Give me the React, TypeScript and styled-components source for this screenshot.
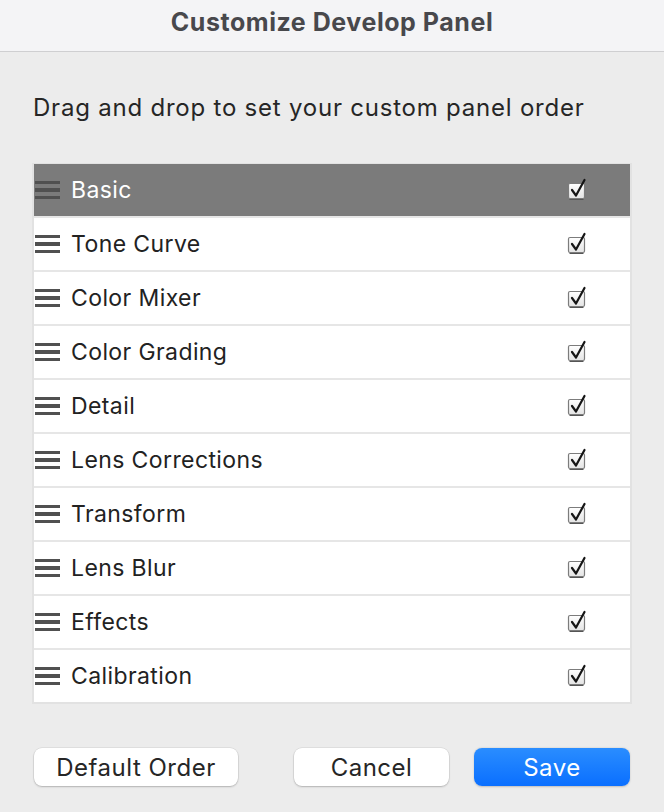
import React from "react";
import styled, { createGlobalStyle } from "styled-components";

const Global = createGlobalStyle`
  html, body { margin: 0; padding: 0; background: #ececec; }
  body { font-family: Inter, "Noto Sans", "Liberation Sans", sans-serif; -webkit-font-smoothing: antialiased; }
`;

const Window = styled.div`
  width: 664px;
  height: 812px;
  background: #ececec;
  display: flex;
  flex-direction: column;
  overflow: hidden;
`;

const TitleBar = styled.div`
  height: 52px;
  box-sizing: border-box;
  background: #f4f4f6;
  border-bottom: 1px solid #cfcfd1;
  display: flex;
  align-items: center;
  justify-content: center;
  font-size: 25px;
  font-weight: 700;
  color: #48484c;
  letter-spacing: 0.55px;
  padding-bottom: 7px;
`;

const Body = styled.div`
  display: flex;
  flex-direction: column;
  padding: 0 32px;
`;

const Instruction = styled.p`
  margin: 38px 0 0 1px;
  font-size: 24px;
  letter-spacing: 0.78px;
  line-height: 36px;
  color: #262626;
`;

const List = styled.div`
  margin-top: 37px;
  border: 2px solid #e2e2e2;
  border-top-width: 1px;
  background: #ffffff;
  display: flex;
  flex-direction: column;
`;

const Row = styled.div<{ $selected?: boolean }>`
  height: 52px;
  display: flex;
  align-items: center;
  background: ${(p) => (p.$selected ? "#7b7b7b" : "#ffffff")};
  border-bottom: 2px solid #e6e6e6;
  &:last-child { border-bottom: none; }
  color: ${(p) => (p.$selected ? "#ffffff" : "#222222")};
`;

const Handle = styled.div`
  width: 25px;
  margin-left: 1px;
  display: flex;
  flex-direction: column;
  gap: 4px;
  & > span {
    display: block;
    height: 3.5px;
    background: #505050;
  }
`;

const Label = styled.span`
  margin-left: 11px;
  font-size: 23px;
  letter-spacing: 0.4px;
  flex: 1;
`;

const CheckWrap = styled.div`
  width: 22px;
  height: 24px;
  margin-right: 42px;
  display: flex;
`;

const Footer = styled.div`
  margin-top: 44px;
  display: flex;
  align-items: center;
`;

const Button = styled.button<{ $primary?: boolean; $w: number }>`
  width: ${(p) => p.$w}px;
  height: 38px;
  border-radius: 8px;
  border: none;
  font-family: inherit;
  font-size: 24px;
  letter-spacing: 0.5px;
  padding: 0;
  color: ${(p) => (p.$primary ? "#ffffff" : "#262626")};
  background: ${(p) =>
    p.$primary ? "linear-gradient(#2a8dff, #0a6fff)" : "#ffffff"};
  box-shadow: ${(p) =>
    p.$primary
      ? "0 0.5px 2px rgba(0,0,0,0.2)"
      : "0 0 0 0.5px rgba(0,0,0,0.1), 0 1px 2px rgba(0,0,0,0.2)"};
`;

const Spacer = styled.div<{ $w: number }>`
  width: ${(p) => p.$w}px;
`;

const CheckIcon = () => (
  <svg width="22" height="24" viewBox="0 0 22 24">
    <defs>
      <linearGradient id="cbg" x1="0" y1="0" x2="0" y2="1">
        <stop offset="0" stopColor="#ffffff" />
        <stop offset="1" stopColor="#e4e4e4" />
      </linearGradient>
    </defs>
    <rect x="2.5" y="5.5" width="16" height="15" rx="1.5" fill="url(#cbg)" stroke="#7c7c7c" strokeWidth="1.2" />
    <line x1="3.5" y1="21.5" x2="17.5" y2="21.5" stroke="#555" strokeWidth="1" />
    <path d="M6 12 L10 17.5 L18.5 2" fill="none" stroke="#151515" strokeWidth="2.2" strokeLinecap="round" strokeLinejoin="round" />
  </svg>
);

const panels = [
  "Basic",
  "Tone Curve",
  "Color Mixer",
  "Color Grading",
  "Detail",
  "Lens Corrections",
  "Transform",
  "Lens Blur",
  "Effects",
  "Calibration",
];

export default function App() {
  return (
    <Window>
      <Global />
      <TitleBar>Customize Develop Panel</TitleBar>
      <Body>
        <Instruction>Drag and drop to set your custom panel order</Instruction>
        <List>
          {panels.map((p, i) => (
            <Row key={p} $selected={i === 0}>
              <Handle>
                <span />
                <span />
                <span />
              </Handle>
              <Label>{p}</Label>
              <CheckWrap>
                <CheckIcon />
              </CheckWrap>
            </Row>
          ))}
        </List>
        <Footer>
          <Spacer $w={2} />
          <Button $w={204}>Default Order</Button>
          <Spacer $w={56} />
          <Button $w={155}>Cancel</Button>
          <Spacer $w={25} />
          <Button $w={156} $primary>Save</Button>
        </Footer>
      </Body>
    </Window>
  );
}
